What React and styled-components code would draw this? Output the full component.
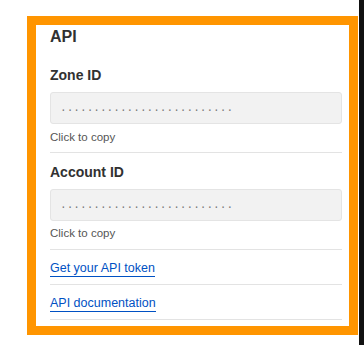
import React from "react";
import styled, { createGlobalStyle } from "styled-components";

const Global = createGlobalStyle`
  html, body { margin: 0; padding: 0; background: #ffffff; }
  body { font-family: "Liberation Sans", Arial, sans-serif; }
`;

const Page = styled.div`
  display: flex;
  width: 364px;
  height: 345px;
  overflow: hidden;
`;

const Main = styled.div`
  flex: 1;
  padding: 16px 0 0 27px;
`;

const Strip = styled.div`
  width: 5px;
  background: #111111;
`;

const Frame = styled.section`
  box-sizing: border-box;
  width: 331px;
  border: 9px solid #ff9500;
  background: #ffffff;
  padding: 2px 7px 6px 14px;
  color: #313131;
`;

const Heading = styled.h2`
  margin: 0;
  font-size: 16px;
  line-height: 20px;
  font-weight: 700;
  color: #313131;
`;

const Field = styled.div`
  display: flex;
  flex-direction: column;
  padding-top: ${(p) => p.$top}px;
  padding-bottom: ${(p) => p.$bottom}px;
  border-bottom: 1px solid #e3e3e3;
`;

const Label = styled.div`
  font-size: 14px;
  line-height: 18px;
  font-weight: 700;
  color: #313131;
`;

const Secret = styled.div`
  box-sizing: border-box;
  margin-top: 8px;
  height: 32px;
  background: #f2f2f2;
  border: 1px solid #e4e4e4;
  border-radius: 3px;
  padding: 0 0 0 9px;
  display: flex;
  align-items: center;
  font-family: "Liberation Mono", monospace;
  font-size: 11.1px;
  line-height: 14px;
  color: #7a7a7a;
  white-space: nowrap;
  overflow: hidden;
`;

const Dots = styled.span`
  position: relative;
  top: 0px;
`;

const Hint = styled.div`
  margin-top: ${(p) => p.$gap}px;
  font-size: 11.5px;
  line-height: 16px;
  color: #555555;
`;

const LinkRow = styled.div`
  padding: 9px 0 7px;
  border-bottom: 1px solid #e3e3e3;
  line-height: 16px;
`;

const Link = styled.a`
  display: inline-block;
  font-size: 12.5px;
  line-height: 16px;
  color: #0051c3;
  text-decoration: none;
  border-bottom: 1.5px solid #0051c3;
`;

const dots = ".".repeat(26);

export default function App() {
  return (
    <>
      <Global />
      <Page>
        <Main>
          <Frame>
            <Heading>API</Heading>
            <Field $top={19} $bottom={7}>
              <Label>Zone ID</Label>
              <Secret>
                <Dots>{dots}</Dots>
              </Secret>
              <Hint $gap={5}>Click to copy</Hint>
            </Field>
            <Field $top={10} $bottom={8}>
              <Label>Account ID</Label>
              <Secret>
                <Dots>{dots}</Dots>
              </Secret>
              <Hint $gap={4}>Click to copy</Hint>
            </Field>
            <LinkRow>
              <Link href="#">Get your API token</Link>
            </LinkRow>
            <LinkRow>
              <Link href="#">API documentation</Link>
            </LinkRow>
          </Frame>
        </Main>
        <Strip />
      </Page>
    </>
  );
}
